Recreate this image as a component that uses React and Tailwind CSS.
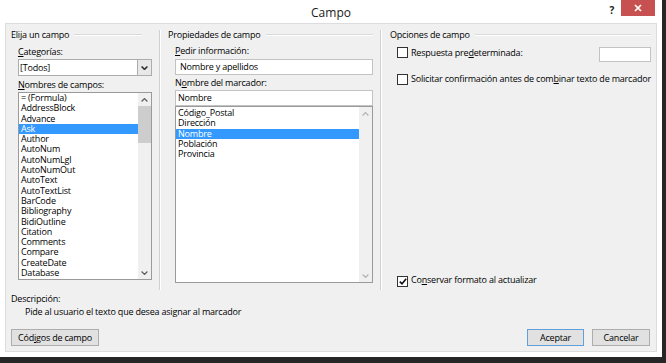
import React from "react";

const leftItems = [
  "= (Formula)", "AddressBlock", "Advance", "Ask", "Author", "AutoNum", "AutoNumLgl",
  "AutoNumOut", "AutoText", "AutoTextList", "BarCode", "Bibliography", "BidiOutline",
  "Citation", "Comments", "Compare", "CreateDate", "Database",
];
const midItems = ["Código_Postal", "Dirección", "Nombre", "Población", "Provincia"];

function Chevron({ up = true, color = "#606060", w = 7, h = 4, sw = 1.3 }) {
  return (
    <svg width={w} height={h} viewBox="0 0 7 4" className="block">
      <path
        d={up ? "M0.6 3.5 L3.5 0.6 L6.4 3.5" : "M0.6 0.5 L3.5 3.4 L6.4 0.5"}
        fill="none"
        stroke={color}
        strokeWidth={sw}
      />
    </svg>
  );
}

function GroupHeader({ label, lineMr = "" }) {
  return (
    <div className="flex items-center h-[10px] gap-[5px]">
      <span className="whitespace-nowrap">{label}</span>
      <div className={`flex-1 h-[2px] border-t border-t-[#dadada] border-b border-b-white ${lineMr}`} />
    </div>
  );
}

function Check({ checked = false }) {
  return (
    <div className="w-[11px] h-[11px] border border-[#333333] bg-white flex items-center justify-center shrink-0">
      {checked && (
        <svg width="8" height="7" viewBox="0 0 8 7" className="block">
          <path d="M0.8 3.6 L3 5.8 L7.2 0.8" fill="none" stroke="#111" strokeWidth="1.6" />
        </svg>
      )}
    </div>
  );
}

function U({ children }) {
  return <span className="underline underline-offset-[1px]">{children}</span>;
}

export default function App() {
  return (
    <div className="w-[666px] h-[363px] bg-[#262626] overflow-hidden font-['Open_Sans',sans-serif] text-[9px] leading-[10px] tracking-[-0.2px] text-black">
      <div className="w-[662px] h-[357px] bg-white flex flex-col">
        {/* Title bar */}
        <div className="h-[23px] grid grid-cols-[1fr_auto_1fr] shrink-0">
          <div />
          <div className="text-[12px] leading-[23px] pt-[1px] tracking-normal text-[#1a1a1a]">Campo</div>
          <div className="flex justify-end items-start pr-[7px]">
            <span className="text-[10px] font-bold leading-[10px] mt-[5px] mr-[7px] text-[#222]">?</span>
            <div className="w-[34px] h-[16px] bg-[#c75050] flex items-center justify-center">
              <svg width="8" height="8" viewBox="0 0 8 8" className="block">
                <path d="M1 1 L7 7 M7 1 L1 7" stroke="white" strokeWidth="1.7" />
              </svg>
            </div>
          </div>
        </div>

        {/* Content */}
        <div className="flex-1 mx-[5px] mb-[5px] border border-[#dcdcdc] bg-[#f0f0f0] flex flex-col pt-[6px] pl-[5px] pr-[5px] pb-[5px]">
          <div className="h-[260px] flex shrink-0">
            {/* Column 1 */}
            <div className="w-[141px] shrink-0 flex flex-col">
              <GroupHeader label="Elija un campo" lineMr="mr-[10px]" />
              <div className="pl-[7px] flex flex-col">
                <div className="mt-[7px] h-[10px]"><U>C</U>ategorías:</div>
                <div className="mt-[2px] w-[134px] h-[17px] border border-[#acacac] bg-white flex">
                  <div className="flex-1 pl-[1px] leading-[15px]">[Todos]</div>
                  <div className="w-[14px] border-l border-[#acacac] bg-[#e8e8e8] flex items-center justify-center">
                    <Chevron up={false} color="#333" sw={1.6} />
                  </div>
                </div>
                <div className="mt-[4px] h-[10px]"><U>N</U>ombres de campos:</div>
                <div className="mt-[2px] w-[134px] h-[188px] border border-[#9a9a9a] bg-white flex">
                  <div className="flex-1 overflow-hidden">
                    {leftItems.map((it) => (
                      <div
                        key={it}
                        className={`h-[10.3px] leading-[10.3px] pl-[2px] whitespace-nowrap ${it === "Ask" ? "bg-[#3399ff] text-white" : ""}`}
                      >
                        {it}
                      </div>
                    ))}
                  </div>
                  <div className="w-[13px] bg-[#f0f0f0] flex flex-col">
                    <div className="h-[13px] flex items-center justify-center"><Chevron /></div>
                    <div className="h-[37px] bg-[#cdcdcd]" />
                    <div className="flex-1" />
                    <div className="h-[13px] flex items-center justify-center"><Chevron up={false} /></div>
                  </div>
                </div>
              </div>
            </div>

            <div className="ml-[7px] mr-[7px] w-[2px] shrink-0 border-l border-l-[#d0d0d0] border-r border-r-white" />

            {/* Column 2 */}
            <div className="w-[205px] shrink-0 flex flex-col">
              <GroupHeader label="Propiedades de campo" />
              <div className="pl-[7px] flex flex-col">
                <div className="mt-[6px] h-[10px]"><U>P</U>edir información:</div>
                <div className="mt-[3px] h-[16px] border border-[#c3c3c3] bg-white pl-[4px] leading-[14px]">Nombre y apellidos</div>
                <div className="mt-[3px] h-[10px]">N<U>o</U>mbre del marcador:</div>
                <div className="mt-[2px] h-[16px] border border-[#c3c3c3] bg-white pl-[2px] leading-[14px]">Nombre</div>
                <div className="h-[177px] border border-[#9a9a9a] bg-white flex">
                  <div className="flex-1 overflow-hidden pt-[1px]">
                    {midItems.map((it) => (
                      <div
                        key={it}
                        className={`h-[10.3px] leading-[10.3px] pl-[2px] whitespace-nowrap ${it === "Nombre" ? "bg-[#3399ff] text-white" : ""}`}
                      >
                        {it}
                      </div>
                    ))}
                  </div>
                  <div className="w-[13px] bg-[#f0f0f0] flex flex-col">
                    <div className="h-[13px] flex items-center justify-center"><Chevron color="#b5b5b5" /></div>
                    <div className="flex-1" />
                    <div className="h-[13px] flex items-center justify-center"><Chevron up={false} color="#b5b5b5" /></div>
                  </div>
                </div>
              </div>
            </div>

            <div className="ml-[7px] mr-[8px] w-[2px] shrink-0 border-l border-l-[#d0d0d0] border-r border-r-white" />

            {/* Column 3 */}
            <div className="flex-1 min-w-0 flex flex-col">
              <GroupHeader label="Opciones de campo" />
              <div className="pl-[7px] flex flex-col flex-1">
                <div className="mt-[7px] flex items-start">
                  <Check />
                  <div className="ml-[3px] mt-[1px] h-[10px]">Respuesta pre<U>d</U>eterminada:</div>
                  <div className="ml-auto w-[52px] h-[15px] border border-[#c3c3c3] bg-white" />
                </div>
                <div className="mt-[12px] flex items-start">
                  <Check />
                  <div className="ml-[3px] h-[10px] whitespace-nowrap">Solicitar confirmación antes de com<U>b</U>inar texto de marcador</div>
                </div>
                <div className="mt-auto mb-[3px] flex items-start">
                  <Check checked />
                  <div className="ml-[3px] mt-[-1px] h-[10px]">Co<U>n</U>servar formato al actualizar</div>
                </div>
              </div>
            </div>
          </div>

          {/* Description */}
          <div className="mt-[4px] h-[10px]">Descripción:</div>
          <div className="mt-[3px] h-[10px] pl-[14px]">Pide al usuario el texto que desea asignar al marcador</div>

          {/* Buttons */}
          <div className="mt-[12px] flex pr-[1px]">
            <div className="w-[88px] h-[17px] border border-[#adadad] bg-[#e1e1e1] flex items-center justify-center">
              Cód<U>i</U>gos de campo
            </div>
            <div className="ml-auto w-[57px] h-[17px] border border-[#5f9fdb] bg-[#e1e1e1] flex items-center justify-center">
              Aceptar
            </div>
            <div className="ml-[8px] w-[58px] h-[17px] border border-[#adadad] bg-[#e1e1e1] flex items-center justify-center">
              Cancelar
            </div>
          </div>
        </div>
      </div>
    </div>
  );
}
